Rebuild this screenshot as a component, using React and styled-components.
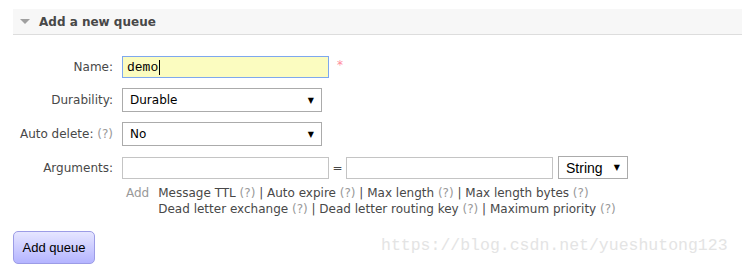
import styled, { createGlobalStyle } from "styled-components";

const Global = createGlobalStyle`
    body{
        margin: 0;
        background: #FFFFFF;
        font-family: "DejaVu Sans", Verdana, sans-serif;
        font-size: 12px;
        color: #484848;
    }
`;

function App () {
    return(
        <>
        <Global/>
        <Page>
            <Section>
                <Arrow/>
                <h2>Add a new queue</h2>
            </Section>
            <Form>
                <Label>Name:</Label>
                <Cell>
                    <NameField>demo<Caret/></NameField>
                    <Required>*</Required>
                </Cell>

                <Label>Durability:</Label>
                <Cell>
                    <Select value="Durable" width={200}/>
                </Cell>

                <Label>Auto delete: <Help>(?)</Help></Label>
                <Cell>
                    <Select value="No" width={200}/>
                </Cell>

                <Label>Arguments:</Label>
                <Cell>
                    <TextBox/>
                    <Equals>=</Equals>
                    <TextBox/>
                    <Select value="String" width={70} small/>
                </Cell>

                <span/>
                <Options>
                    <AddWord>Add</AddWord>
                    <p>
                        Message TTL <Help>(?)</Help> | Auto expire <Help>(?)</Help> | Max length <Help>(?)</Help> | Max length bytes <Help>(?)</Help><br/>
                        Dead letter exchange <Help>(?)</Help> | Dead letter routing key <Help>(?)</Help> | Maximum priority <Help>(?)</Help>
                    </p>
                </Options>
            </Form>
            <Submit>Add queue</Submit>
            <Watermark>https://blog.csdn.net/yueshutong123</Watermark>
        </Page>
        </>
    )
}

function Select ({ value, width, small }) {
    return(
        <SelectBox width={width} small={small}>
            <span>{value}</span>
            <i>▼</i>
        </SelectBox>
    )
}

export default App;

const Page = styled.div`
    position: relative;
    width: 742px;
    height: 268px;
    box-sizing: border-box;
    padding: 9px 0 0 13px;
    overflow: hidden;
`;

const Section = styled.div`
    height: 25px;
    background: #F7F7F7;
    border-bottom: 1px solid #DDDDDD;
    display: flex;
    align-items: center;
    padding-left: 7px;
    h2{
        margin: 0 0 0 9px;
        font-size: 12px;
        font-weight: 700;
        color: #484848;
    }
`;

const Arrow = styled.div`
    width: 0;
    height: 0;
    border-left: 5px solid transparent;
    border-right: 5px solid transparent;
    border-top: 5px solid #A0A0A0;
`;

const Form = styled.div`
    display: grid;
    grid-template-columns: 100px auto;
    column-gap: 9px;
    row-gap: 10px;
    align-items: center;
    margin-top: 21px;
`;

const Label = styled.div`
    text-align: right;
    white-space: nowrap;
    color: #484848;
`;

const Help = styled.span`
    color: #999999;
`;

const Cell = styled.div`
    display: flex;
    align-items: center;
`;

const NameField = styled.div`
    width: 207px;
    height: 22px;
    box-sizing: border-box;
    border: 1px solid #7EA8EE;
    background: #FBFCC0;
    font-family: "Liberation Mono", monospace;
    font-size: 13px;
    color: #000000;
    padding-left: 4px;
    display: flex;
    align-items: center;
`;

const Caret = styled.span`
    display: inline-block;
    width: 1px;
    height: 15px;
    background: #000000;
    margin-left: 1px;
`;

const Required = styled.span`
    align-self: flex-start;
    margin: 2px 0 0 8px;
    color: #FF8A9A;
    font-size: 12px;
`;

const SelectBox = styled.div`
    width: ${props => props.width}px;
    height: ${props => props.small ? 23 : 24}px;
    box-sizing: border-box;
    border: 1px solid #ABABAB;
    background: #FFFFFF;
    display: flex;
    align-items: center;
    justify-content: space-between;
    padding: 0 7px 0 7px;
    margin-left: ${props => props.small ? 5 : 0}px;
    span{
        color: #000000;
        font-family: ${props => props.small ? '"Liberation Sans", Arial, sans-serif' : 'inherit'};
        font-size: ${props => props.small ? 14 : 12}px;
    }
    i{
        font-style: normal;
        font-size: 8px;
        color: #000000;
    }
`;

const TextBox = styled.div`
    width: 207px;
    height: 22px;
    box-sizing: border-box;
    border: 1px solid #C4C4C4;
    background: #FFFFFF;
`;

const Equals = styled.span`
    width: 17px;
    text-align: center;
    color: #484848;
`;

const Options = styled.div`
    display: flex;
    margin: -4px 0 0 4px;
    p{
        margin: 0;
        line-height: 16px;
        color: #484848;
    }
`;

const AddWord = styled.span`
    color: #999999;
    margin-right: 9px;
    line-height: 16px;
`;

const Submit = styled.button`
    margin-top: 14px;
    width: 82px;
    height: 33px;
    border: 1px solid #9C9CE6;
    border-radius: 5px;
    background: linear-gradient(#E6E6FF, #B4B4FF);
    font-family: "Liberation Sans", Arial, sans-serif;
    font-size: 13px;
    color: #000000;
    padding: 0;
`;

const Watermark = styled.div`
    position: absolute;
    left: 381px;
    top: 236px;
    font-family: "Liberation Mono", monospace;
    font-size: 16.5px;
    color: #E4E4E4;
    pointer-events: none;
`;
